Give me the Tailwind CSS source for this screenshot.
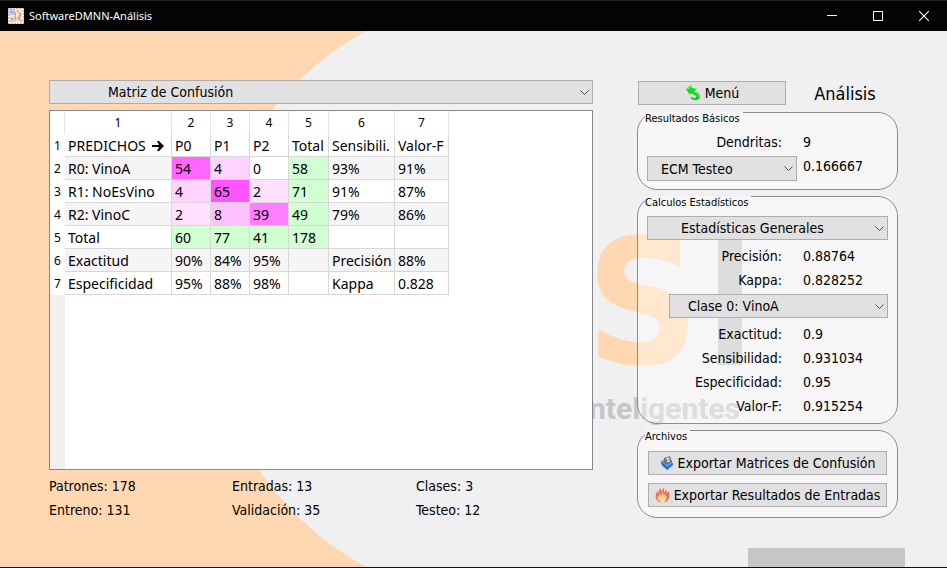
<!DOCTYPE html>
<html lang="es">
<head>
<meta charset="utf-8">
<title>SoftwareDMNN-Análisis</title>
<script src="https://cdn.jsdelivr.net/npm/@tailwindcss/browser@4"></script>
</head>
<body class="bg-[#f0f0f0]">
<div class="flex min-h-screen flex-col border-b border-[#111] font-['DejaVu_Sans_Condensed','Noto_Sans',sans-serif] text-[14px] leading-6 text-black">
  <header class="flex h-[31px] items-center border-t border-[#222] bg-[#040404] pl-2 font-['Noto_Sans',sans-serif] text-[11px] text-white">
    <svg class="mr-[5px] h-4 w-4" viewBox="0 0 16 16" aria-hidden="true">
      <rect x=".5" y=".5" width="15" height="15" fill="#f5e6da" stroke="#fff" stroke-dasharray="2 1"/>
      <path d="M1 1h6v6H1z" fill="#b9c8ea"/><path d="M2 9h5v5H2z" fill="#f3c79c"/><path d="M9 2l3 4-2 4 4 4" fill="none" stroke="#f0b98a" stroke-width="2"/>
      <path d="M3 3l2 2M3 12l2-2M11 12l2-7M7 4l1 9" stroke="#8d83a8" stroke-width=".8"/>
    </svg>
    <h1 class="flex-1">SoftwareDMNN-Análisis</h1>
    <button aria-label="Minimizar" class="flex h-full w-[46px] items-center justify-center"><svg width="10" height="10" viewBox="0 0 10 10"><path d="M0 4.5h10" stroke="#fff"/></svg></button>
    <button aria-label="Maximizar" class="flex h-full w-[46px] items-center justify-center"><svg width="10" height="10" viewBox="0 0 10 10"><path d="M.5.5h9v9h-9z" fill="none" stroke="#fff"/></svg></button>
    <button aria-label="Cerrar" class="flex h-full w-[46px] items-center justify-center"><svg width="10" height="10" viewBox="0 0 10 10"><path d="M0 0l10 10M10 0L0 10" stroke="#fff" stroke-width="1.1"/></svg></button>
  </header>

  <main class="relative flex flex-1 gap-[44px] overflow-hidden pr-[49px] pl-[49px] pt-[49px]">
    <svg class="absolute top-0 left-0" width="947" height="536" viewBox="0 31 947 536" aria-hidden="true">
      <path d="M0 31H366A305 305 0 0 0 366 567H0Z" fill="#ffd8b1"/>
      <text x="586" y="364" font-family="DejaVu Sans Condensed, Noto Sans, sans-serif" font-weight="700" font-size="175" fill="#ffd8b1">S</text>
      <rect x="718" y="236" width="24" height="129" fill="#c6c6c6"/>
      <text x="740" y="419" text-anchor="end" font-family="Roboto, sans-serif" font-weight="700" font-size="30" fill="#c6c6c6">Inteligentes</text>
      <rect x="748" y="548" width="157" height="19" fill="#c6c6c6"/>
    </svg>

    <section class="relative flex min-w-0 flex-1 flex-col">
      <div class="relative">
        <select aria-label="Vista" class="block h-6 w-full appearance-none border border-[#adadad] bg-[#e1e1e1] pl-[58px] leading-[22px]"><option>Matriz de Confusión</option></select>
        <svg class="pointer-events-none absolute top-[10px] right-[4px]" width="9" height="6" viewBox="0 0 9 6"><path d="M.5.5l4 4 4-4" fill="none" stroke="#505050"/></svg>
      </div>
      <div class="mt-[6px] flex h-[360px] flex-col border border-[#828790] bg-white">
        <table class="w-[399px] table-fixed border-separate border-spacing-0 text-left font-['Noto_Sans',sans-serif] leading-5 [&_td]:h-[23px] [&_td]:border-r [&_td]:border-b [&_td]:border-[#d8d8d8] [&_td]:pt-[2px] [&_td]:pb-0 [&_td]:pl-[3px] [&_td]:whitespace-nowrap [&_th]:h-[23px] [&_th]:p-0 [&_th]:text-center [&_th]:text-[12px] [&_th]:font-normal [&_thead_th]:border-r [&_thead_th]:border-[#e5e5e5]">
          <colgroup><col class="w-[15px]"><col class="w-[107px]"><col class="w-[39px]"><col class="w-[39px]"><col class="w-[39px]"><col class="w-[40px]"><col class="w-[66px]"><col class="w-[54px]"></colgroup>
          <thead><tr><th></th><th>1</th><th>2</th><th>3</th><th>4</th><th>5</th><th>6</th><th>7</th></tr></thead>
          <tbody>
            <tr><th>1</th><td><span class="flex items-center gap-[6px]">PREDICHOS <svg width="12" height="10" viewBox="0 0 12 10"><path d="M0 4h7L5 0h2l5 5-5 5H5l2-4H0Z"/></svg></span></td><td>P0</td><td>P1</td><td>P2</td><td>Total</td><td>Sensibili.</td><td>Valor-F</td></tr>
            <tr class="bg-[#f5f5f5]"><th class="bg-white">2</th><td>R0: VinoA</td><td class="bg-[#ff66ff]">54</td><td class="bg-[#ffd2ff]">4</td><td class="bg-white">0</td><td class="bg-[#d2ffd2]">58</td><td>93%</td><td>91%</td></tr>
            <tr><th>3</th><td>R1: NoEsVino</td><td class="bg-[#ffd2ff]">4</td><td class="bg-[#ff55ff]">65</td><td class="bg-[#ffe1ff]">2</td><td class="bg-[#d2ffd2]">71</td><td>91%</td><td>87%</td></tr>
            <tr class="bg-[#f5f5f5]"><th class="bg-white">4</th><td>R2: VinoC</td><td class="bg-[#ffe1ff]">2</td><td class="bg-[#ffc0ff]">8</td><td class="bg-[#ff7dff]">39</td><td class="bg-[#d2ffd2]">49</td><td>79%</td><td>86%</td></tr>
            <tr><th>5</th><td>Total</td><td class="bg-[#d2ffd2]">60</td><td class="bg-[#d2ffd2]">77</td><td class="bg-[#d2ffd2]">41</td><td class="bg-[#d2ffd2]">178</td><td></td><td></td></tr>
            <tr class="bg-[#f5f5f5]"><th class="bg-white">6</th><td>Exactitud</td><td>90%</td><td>84%</td><td>95%</td><td></td><td>Precisión</td><td>88%</td></tr>
            <tr><th>7</th><td>Especificidad</td><td>95%</td><td>88%</td><td>98%</td><td></td><td>Kappa</td><td>0.828</td></tr>
          </tbody>
        </table>
        <div class="w-[15px] flex-1 bg-[#f0f0f0]"></div>
      </div>
      <div class="mt-1 grid grid-cols-[183px_184px_1fr]">
        <p>Patrones: 178</p><p>Entradas: 13</p><p>Clases: 3</p>
        <p>Entreno: 131</p><p>Validación: 35</p><p>Testeo: 12</p>
      </div>
    </section>

    <aside class="relative flex w-[261px] flex-col gap-[6px]">
      <div class="flex h-[26px] items-center pl-px">
        <button class="flex h-6 w-[148px] items-center justify-center gap-1 border border-[#adadad] bg-[#e1e1e1]">
          <svg width="16" height="16" viewBox="0 0 16 16" aria-hidden="true"><path d="M1 4L6 0l1 3 5 1-3 2c4 1 6 3 6 6 0 2-3 4-6 3-2 0-3-1-4-3 3 2 6 2 6 0 0-2-2-2-4-3L6 8 5 10Z" fill="#10dc20"/><path d="M2 4l4-2M9 7c4 1 5 3 4 5" fill="none" stroke="#7df586"/><path d="M6 12c2 2 6 2 7 0" fill="none" stroke="#0aa51a" stroke-width=".8"/></svg>
          Menú
        </button>
        <h2 class="flex-1 pt-[2px] pl-[6px] text-center text-[18px]">Análisis</h2>
      </div>

      <fieldset class="h-[78px] rounded-[20px] border border-[#8c8c8c] bg-white/40">
        <legend class="float-left -mt-px ml-[7px] bg-[#f6f6f6] pr-[3px] text-[11px] leading-[14px]">Resultados Básicos</legend>
        <div class="clear-both flex gap-[6px] pt-1 pl-[9px]">
          <div class="w-[150px]">
            <p class="pr-[15px] text-right">Dendritas:</p>
            <div class="relative mt-[2px]">
              <select aria-label="Error" class="block h-[25px] w-full appearance-none border border-[#adadad] bg-[#e1e1e1] pl-[13px] leading-[22px]"><option>ECM Testeo</option></select>
              <svg class="pointer-events-none absolute top-[10px] right-[4px]" width="9" height="6" viewBox="0 0 9 6"><path d="M.5.5l4 4 4-4" fill="none" stroke="#505050"/></svg>
            </div>
          </div>
          <div><p>9</p><p>0.166667</p></div>
        </div>
      </fieldset>

      <fieldset class="h-[228px] rounded-[20px] border border-[#8c8c8c] bg-white/40">
        <legend class="float-left -mt-px ml-[7px] bg-[#f6f6f6] pr-[3px] text-[11px] leading-[14px]">Calculos Estadísticos</legend>
        <div class="clear-both px-[9px] pt-[6px]">
          <div class="relative">
            <select aria-label="Estadísticas" class="block h-6 w-full appearance-none border border-[#adadad] bg-[#e1e1e1] pl-[33px] leading-[22px]"><option>Estadísticas Generales</option></select>
            <svg class="pointer-events-none absolute top-[10px] right-[4px]" width="9" height="6" viewBox="0 0 9 6"><path d="M.5.5l4 4 4-4" fill="none" stroke="#505050"/></svg>
          </div>
          <dl class="mt-1 grid grid-cols-[135px_1fr] gap-x-[21px] [&_dt]:text-right">
            <dt>Precisión:</dt><dd>0.88764</dd><dt>Kappa:</dt><dd>0.828252</dd>
          </dl>
          <div class="relative mt-[2px] ml-[22px]">
            <select aria-label="Clase" class="block h-6 w-full appearance-none border border-[#adadad] bg-[#e1e1e1] pl-[18px] leading-[22px]"><option>Clase 0: VinoA</option></select>
            <svg class="pointer-events-none absolute top-[10px] right-[4px]" width="9" height="6" viewBox="0 0 9 6"><path d="M.5.5l4 4 4-4" fill="none" stroke="#505050"/></svg>
          </div>
          <dl class="mt-1 grid grid-cols-[135px_1fr] gap-x-[21px] [&_dt]:text-right">
            <dt>Exactitud:</dt><dd>0.9</dd><dt>Sensibilidad:</dt><dd>0.931034</dd><dt>Especificidad:</dt><dd>0.95</dd><dt>Valor-F:</dt><dd>0.915254</dd>
          </dl>
        </div>
      </fieldset>

      <fieldset class="h-[88px] rounded-[20px] border border-[#8c8c8c] bg-white/40">
        <legend class="float-left -mt-px ml-[7px] bg-[#f6f6f6] pr-[3px] text-[11px] leading-[14px]">Archivos</legend>
        <div class="clear-both flex flex-col gap-2 px-[10px] pt-[7px]">
          <button class="flex h-6 items-center justify-center gap-1 border border-[#adadad] bg-[#e1e1e1] whitespace-nowrap">
            <svg class="shrink-0" width="14" height="14" viewBox="0 0 14 14" aria-hidden="true"><path d="M1 5l9-4 3 7-7 4-4-2Z" fill="#5a9cf5"/><path d="M1 5l1 4 5 5 6-5V7L7 11Z" fill="#2368d8"/><path d="M4 2l6-2 2 6-5 3-3-2Z" fill="#6d747c"/><path d="M6 2l3-1 1 3-3 1Z" fill="#c9cdd2"/><path d="M7 6l3-1" stroke="#e4e6e8"/></svg>
            Exportar Matrices de Confusión
          </button>
          <button class="flex h-6 items-center justify-center gap-1 border border-[#adadad] bg-[#e1e1e1] whitespace-nowrap">
            <svg class="shrink-0" width="15" height="15" viewBox="0 0 15 15" aria-hidden="true"><path d="M5 14C1 13 0 9 1 6L2 3l1 3 1-4 2-2v5l2-4 1-1v5l2-4 1 4 2-2c1 5 0 10-4 11Z" fill="#ef6a55"/><path d="M5 13C2 12 2 9 3 7l1 2 1-5 1 4 2-4 1 4 2-3v4l1-1c0 3-1 4-3 5Z" fill="#ffc9a0"/><path d="M6 14c-2-1-2-3-1-5l2 2 1-3 1 3 2-1c0 2-1 3-2 4Z" fill="#ffe07a"/></svg>
            Exportar Resultados de Entradas
          </button>
        </div>
      </fieldset>
    </aside>
  </main>
</div>
</body>
</html>
